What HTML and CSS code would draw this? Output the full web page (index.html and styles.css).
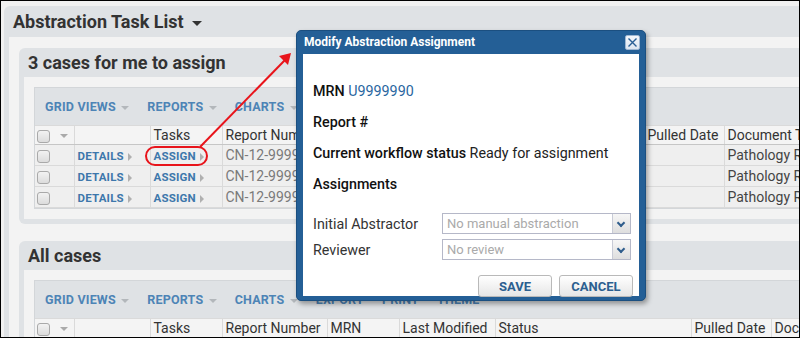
FILE: index.html
```html
<!DOCTYPE html>
<html lang="en">
<head>
    <meta charset="UTF-8">
    <title>Abstraction Task List</title>
    <link rel="stylesheet" href="styles.css">
</head>
<body>
<div class="frame">
    <div class="page">
        <div class="panel outer">
            <div class="panel-title">Abstraction Task List <span class="caret dark"></span></div>
            <div class="panel-body">

                <div class="panel inner">
                    <div class="panel-title">3 cases for me to assign</div>
                    <div class="panel-body">
                        <div class="grid">
                            <div class="toolbar">
                                <span class="tb-item">Grid Views <span class="caret"></span></span>
                                <span class="tb-item">Reports <span class="caret"></span></span>
                                <span class="tb-item">Charts <span class="caret"></span></span>
                            </div>
                            <table class="cases top">
                                <colgroup>
                                    <col class="c-sel"><col class="c-det"><col class="c-task"><col class="c-rep">
                                    <col class="c-mrn"><col class="c-mod"><col class="c-stat"><col class="c-pull"><col class="c-doc">
                                </colgroup>
                                <tr class="head">
                                    <td><span class="check"></span><span class="caret light"></span></td>
                                    <td></td><td>Tasks</td><td>Report Number</td><td></td>
                                    <td></td><td></td><td>Pulled Date</td><td>Document Type</td>
                                </tr>
                                <tr>
                                    <td><span class="check"></span></td>
                                    <td><a class="act">Details <span class="tri"></span></a></td>
                                    <td><a class="act">Assign <span class="tri"></span></a></td>
                                    <td class="muted">CN-12-99999</td><td></td>
                                    <td></td><td></td><td></td><td>Pathology Report</td>
                                </tr>
                                <tr>
                                    <td><span class="check"></span></td>
                                    <td><a class="act">Details <span class="tri"></span></a></td>
                                    <td><a class="act">Assign <span class="tri"></span></a></td>
                                    <td class="muted">CN-12-99998</td><td></td>
                                    <td></td><td></td><td></td><td>Pathology Report</td>
                                </tr>
                                <tr>
                                    <td><span class="check"></span></td>
                                    <td><a class="act">Details <span class="tri"></span></a></td>
                                    <td><a class="act">Assign <span class="tri"></span></a></td>
                                    <td class="muted">CN-12-99997</td><td></td>
                                    <td></td><td></td><td></td><td>Pathology Report</td>
                                </tr>
                            </table>
                        </div>
                    </div>
                </div>

                <div class="panel inner">
                    <div class="panel-title">All cases</div>
                    <div class="panel-body">
                        <div class="grid">
                            <div class="toolbar">
                                <span class="tb-item">Grid Views <span class="caret"></span></span>
                                <span class="tb-item">Reports <span class="caret"></span></span>
                                <span class="tb-item">Charts <span class="caret"></span></span>
                                <span class="tb-item">Export</span>
                                <span class="tb-item">Print</span>
                                <span class="tb-item">Theme</span>
                            </div>
                            <table class="cases bottom">
                                <colgroup>
                                    <col class="c-sel"><col class="c-det"><col class="c-task"><col class="c-rep">
                                    <col class="c-mrn"><col class="c-mod"><col class="c-stat"><col class="c-pull"><col class="c-doc">
                                </colgroup>
                                <tr class="head">
                                    <td><span class="check"></span><span class="caret light"></span></td>
                                    <td></td><td>Tasks</td><td>Report Number</td><td>MRN</td>
                                    <td>Last Modified</td><td>Status</td><td>Pulled Date</td><td>Document Type</td>
                                </tr>
                            </table>
                        </div>
                    </div>
                </div>

            </div>
        </div>
    </div>

    <div class="modal">
        <div class="modal-head">
            Modify Abstraction Assignment
            <span class="close">
                <svg width="11" height="11" viewBox="0 0 11 11"><path d="M1.5 1.5 L9.5 9.5 M9.5 1.5 L1.5 9.5" stroke="#2a5f95" stroke-width="1.4" fill="none"/></svg>
            </span>
        </div>
        <div class="modal-body">
            <div class="line"><b>MRN</b> <span class="link">U9999990</span></div>
            <div class="line"><b>Report #</b></div>
            <div class="line"><b>Current workflow status</b> Ready for assignment</div>
            <div class="line"><b>Assignments</b></div>
            <div class="form-row">
                <label>Initial Abstractor</label>
                <div class="combo"><span>No manual abstraction</span><i class="trigger"></i></div>
            </div>
            <div class="form-row">
                <label>Reviewer</label>
                <div class="combo"><span>No review</span><i class="trigger"></i></div>
            </div>
            <div class="buttons">
                <button>Save</button>
                <button>Cancel</button>
            </div>
        </div>
    </div>

    <svg class="callout" width="800" height="338" viewBox="0 0 800 338">
        <rect x="146" y="147" width="61" height="18" rx="9" fill="none" stroke="#e8141b" stroke-width="2"/>
        <line x1="200" y1="147" x2="285" y2="60" stroke="#e8141b" stroke-width="2"/>
        <polygon points="291,53 288,65 279,56" fill="#e8141b"/>
    </svg>
</div>
</body>
</html>
```

FILE: styles.css
```css
body {
    margin: 0;
    font-family: Roboto, "Liberation Sans", sans-serif;
    color: #333;
}
.frame {
    position: relative;
    width: 800px;
    height: 338px;
    box-sizing: border-box;
    border: 1px solid #000;
    overflow: hidden;
    background: #f1f1f1;
}
.page {
    width: 1000px;
    padding: 5px 0 0 3px;
}
.panel {
    background: #dfe2e5;
    border-radius: 6px;
    padding: 0 5px 5px;
}
.panel-title {
    font-weight: bold;
    font-size: 18px;
    color: #333;
    padding-left: 4px;
}
.outer > .panel-title { height: 31px; line-height: 32px; }
.inner > .panel-title { height: 29px; line-height: 29px; }
.outer > .panel-body {
    background: #f3f3f3;
    padding: 11px 10px;
}
.inner > .panel-body {
    background: #f3f3f3;
    padding: 10px;
}
.inner + .inner { margin-top: 17px; }

.caret {
    display: inline-block;
    width: 0;
    height: 0;
    border-left: 4px solid transparent;
    border-right: 4px solid transparent;
    border-top: 4px solid #b3b7bb;
    vertical-align: middle;
    margin-left: 2px;
}
.caret.dark {
    border-left-width: 5px;
    border-right-width: 5px;
    border-top: 5px solid #333;
    margin-left: 4px;
}
.caret.light { border-top-color: #aaa; margin-left: 10px; }

/* grid */
.grid {
    border: 1px solid #d3d6d9;
    border-right: 0;
}
.toolbar {
    height: 37px;
    background: #dfe2e5;
    padding-left: 10px;
    display: flex;
    align-items: center;
    gap: 18px;
}
.tb-item {
    font-size: 12.5px;
    font-weight: bold;
    text-transform: uppercase;
    color: #4d84b6;
    letter-spacing: 0.2px;
}
.cases {
    border-collapse: collapse;
    table-layout: fixed;
    font-size: 14px;
}
.cases.top { width: 809px; }
.cases.bottom { width: 856px; }
.c-sel { width: 39px; }
.c-det { width: 76px; }
.c-task { width: 72px; }
.c-rep { width: 105px; }
.c-mrn { width: 72px; }
.c-mod { width: 96px; }
.top .c-stat { width: 149px; }
.bottom .c-stat { width: 196px; }
.c-pull { width: 80px; }
.c-doc { width: 120px; }
.cases td {
    height: 20px;
    padding: 0 0 0 3px;
    border: 1px solid #dadada;
    background: #efefef;
    white-space: nowrap;
    overflow: hidden;
    color: #444;
}
.cases tr.head td {
    height: 18px;
    background: #f4f4f4;
    border-bottom: 1px solid #c6c6c6;
    color: #333;
}
.cases td:first-child { padding-left: 2px; border-left: 0; }
.cases td.muted { color: #7a7a7a; }
.check {
    display: inline-block;
    width: 11px;
    height: 11px;
    border: 1px solid #a9a9a9;
    border-radius: 3px;
    background: linear-gradient(#f2f2f2, #dcdcdc);
    vertical-align: middle;
}
.act {
    font-size: 11.5px;
    font-weight: bold;
    text-transform: uppercase;
    color: #3d77ab;
    letter-spacing: 0.2px;
}
.tri {
    display: inline-block;
    width: 0;
    height: 0;
    border-top: 4px solid transparent;
    border-bottom: 4px solid transparent;
    border-left: 4px solid #b0b0b0;
    vertical-align: middle;
    margin-left: 1px;
}

/* dialog */
.modal {
    position: absolute;
    left: 295px;
    top: 29px;
    width: 350px;
    height: 271px;
    box-sizing: border-box;
    padding: 0 6px 5px;
    background: #245f96;
    border: 1px solid #1b4f80;
    border-radius: 5px;
    box-shadow: 2px 3px 5px rgba(0, 0, 0, 0.35);
}
.modal-head {
    position: relative;
    height: 23px;
    line-height: 23px;
    padding-left: 1px;
    color: #fff;
    font-size: 12px;
    font-weight: bold;
}
.close {
    position: absolute;
    right: -1px;
    top: 4px;
    width: 13px;
    height: 13px;
    border: 1px solid #9fb7d2;
    border-radius: 2px;
    background: linear-gradient(#f4f7fb, #dde6f1);
    display: flex;
    align-items: center;
    justify-content: center;
}
.modal-body {
    background: #fff;
    height: 242px;
    box-sizing: border-box;
    padding: 22px 6px 0 10px;
    font-size: 14.3px;
    color: #222;
}
.line {
    height: 31px;
    line-height: 31px;
}
.line b { font-weight: 500; color: #111; }
.link { color: #2a66a0; }
.form-row {
    display: flex;
    align-items: center;
    height: 21px;
    margin-top: 5px;
}
.line + .form-row { margin-top: 13px; }
.form-row label {
    width: 129px;
    color: #333;
}
.combo {
    width: 189px;
    height: 21px;
    box-sizing: border-box;
    border: 1px solid #b5b8c8;
    display: flex;
    align-items: center;
    font-size: 13px;
    color: #aaa;
}
.combo span {
    flex: 1;
    padding-left: 4px;
}
.trigger {
    width: 17px;
    height: 19px;
    border-left: 1px solid #c8cbd6;
    background: linear-gradient(#f6f6f6, #dedede);
    position: relative;
}
.trigger::after {
    content: "";
    position: absolute;
    left: 5px;
    top: 6px;
    width: 4px;
    height: 4px;
    border-right: 2px solid #2f5d8c;
    border-bottom: 2px solid #2f5d8c;
    transform: rotate(45deg);
}
.buttons {
    display: flex;
    justify-content: flex-end;
    gap: 7px;
    margin-top: 15px;
}
.buttons button {
    width: 74px;
    height: 22px;
    border: 1px solid #b9b9b9;
    border-radius: 3px;
    background: linear-gradient(#ffffff, #e6e6e6);
    font-family: Roboto, "Liberation Sans", sans-serif;
    font-size: 13px;
    font-weight: bold;
    text-transform: uppercase;
    color: #2c5f90;
    padding: 0;
}

.callout {
    position: absolute;
    left: -1px;
    top: -1px;
    pointer-events: none;
}
```
